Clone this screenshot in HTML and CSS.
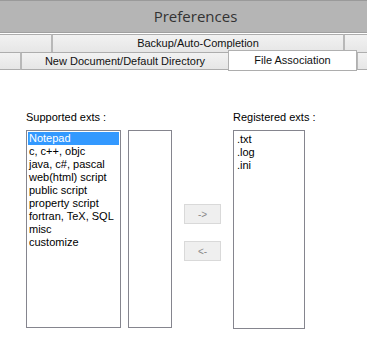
FILE: index.html
```html
<!DOCTYPE html>
<html lang="en">
<head>
    <meta charset="UTF-8">
    <title>Preferences</title>
    <link rel="stylesheet" href="styles.css">
</head>
<body>
    <div class="titlebar">Preferences</div>

    <div class="tabs">
        <div class="tab-row">
            <div class="tab" style="width: 54px"></div>
            <div class="tab" style="width: 293px">Backup/Auto-Completion</div>
            <div class="tab" style="width: 40px"></div>
        </div>
        <div class="tab-row">
            <div class="tab" style="width: 23px"></div>
            <div class="tab" style="width: 209px">New Document/Default Directory</div>
            <div class="tab active" style="width: 129px">File Association</div>
            <div class="tab" style="width: 30px"></div>
        </div>
    </div>

    <div class="content">
        <div class="col">
            <div class="label">Supported exts :</div>
            <div class="lists">
                <ul class="listbox wide">
                    <li class="selected">Notepad</li>
                    <li>c, c++, objc</li>
                    <li>java, c#, pascal</li>
                    <li>web(html) script</li>
                    <li>public script</li>
                    <li>property script</li>
                    <li>fortran, TeX, SQL</li>
                    <li>misc</li>
                    <li>customize</li>
                </ul>
                <ul class="listbox narrow"></ul>
            </div>
        </div>

        <div class="buttons">
            <button class="btn" disabled>-&gt;</button>
            <button class="btn" disabled>&lt;-</button>
        </div>

        <div class="col">
            <div class="label">Registered exts :</div>
            <ul class="listbox registered">
                <li>.txt</li>
                <li>.log</li>
                <li>.ini</li>
            </ul>
        </div>
    </div>
</body>
</html>
```

FILE: styles.css
```css
body {
    margin: 0;
    width: 367px;
    height: 344px;
    overflow: hidden;
    background: white;
    font-family: "Liberation Sans", Arial, sans-serif;
    font-size: 11px;
    color: black;
}

.titlebar {
    height: 31px;
    line-height: 31px;
    background: #b5b5b5;
    border-top: 1px solid #9a9a9a;
    border-bottom: 1px solid #a0a0a0;
    text-align: center;
    font-family: "Open Sans", sans-serif;
    font-size: 15px;
    color: #333;
    padding-left: 24px;
}

.tabs {
    overflow: hidden;
    height: 38px;
    margin-top: 1px;
}

.tab-row {
    display: flex;
    height: 18px;
    margin-left: -2px;
}

.tab {
    flex: none;
    box-sizing: border-box;
    height: 18px;
    border: 1px solid #adadad;
    border-left: 2px solid #b8b8b8;
    border-bottom: none;
    background: linear-gradient(#f2f2f2, #e6e6e6);
    text-align: center;
    line-height: 17px;
    color: #111;
    margin-right: -1px;
}

.tab-row + .tab-row .tab {
    border-bottom: 1px solid #adadad;
}

.tab.active {
    background: white;
    height: 21px;
    margin-top: -2px;
    border: 1px solid #b0b0b0;
    border-bottom: none;
    line-height: 19px;
    position: relative;
}

.content {
    display: flex;
    padding: 39px 0 0 26px;
}

.label {
    height: 13px;
    line-height: 13px;
    margin-bottom: 6px;
}

.lists {
    display: flex;
    gap: 7px;
}

.listbox {
    list-style: none;
    margin: 0;
    padding: 1px;
    box-sizing: border-box;
    border: 1px solid #85858e;
    height: 198px;
}

.listbox li {
    height: 13px;
    line-height: 13px;
    padding-left: 1px;
    white-space: nowrap;
}

.listbox li.selected {
    background: #3399ff;
    color: white;
}

.wide {
    width: 95px;
}

.narrow {
    width: 44px;
}

.registered {
    width: 72px;
    height: 199px;
    padding: 2px;
}

.buttons {
    display: flex;
    flex-direction: column;
    gap: 17px;
    padding-top: 93px;
    margin: 0 12px;
}

.btn {
    width: 37px;
    height: 20px;
    background: #efefef;
    border: 1px solid #d9d9d9;
    color: #8a8a8a;
    font-family: "Liberation Sans", Arial, sans-serif;
    font-size: 10px;
    padding: 0;
}
```
